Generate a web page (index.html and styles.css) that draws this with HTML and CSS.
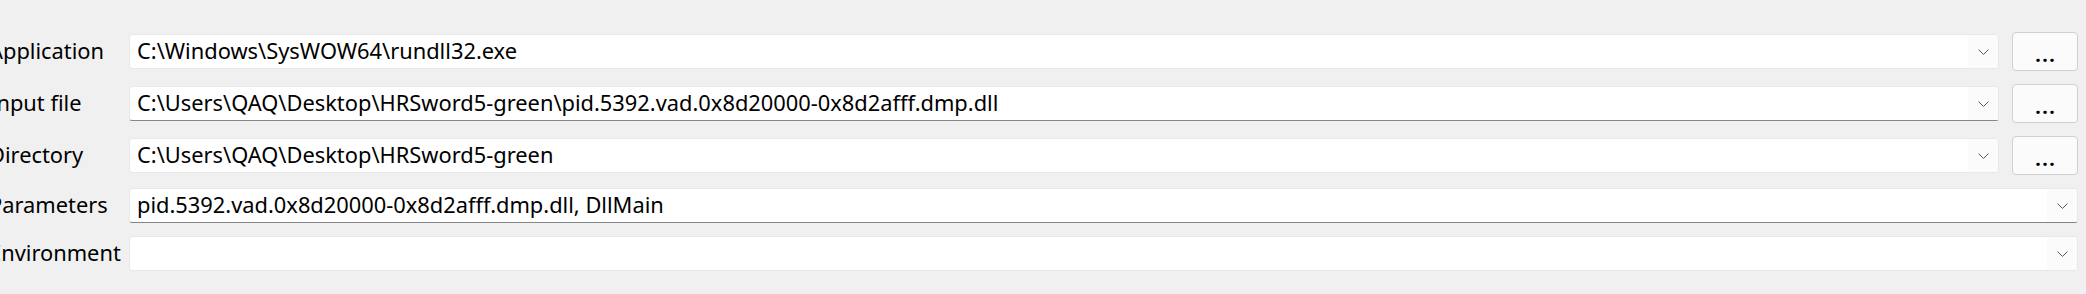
FILE: index.html
```html
<!DOCTYPE html>
<html lang="en">
<head>
<meta charset="utf-8">
<title>Run options</title>
<link rel="stylesheet" href="styles.css">
</head>
<body>
<div class="form">
  <span class="lbl">Application</span>
  <div class="combo">
    <span class="val">C:\Windows\SysWOW64\rundll32.exe</span>
    <span class="drop"><svg width="11" height="6" viewBox="0 0 11 6"><polyline points="0.5,0.5 5.5,5.5 10.5,0.5" fill="none" stroke="#5c5c5c" stroke-width="1"/></svg></span>
  </div>
  <button class="browse" type="button">...</button>

  <span class="lbl">Input file</span>
  <div class="combo underline">
    <span class="val">C:\Users\QAQ\Desktop\HRSword5-green\pid.5392.vad.0x8d20000-0x8d2afff.dmp.dll</span>
    <span class="drop"><svg width="11" height="6" viewBox="0 0 11 6"><polyline points="0.5,0.5 5.5,5.5 10.5,0.5" fill="none" stroke="#5c5c5c" stroke-width="1"/></svg></span>
  </div>
  <button class="browse" type="button">...</button>

  <span class="lbl">Directory</span>
  <div class="combo">
    <span class="val">C:\Users\QAQ\Desktop\HRSword5-green</span>
    <span class="drop"><svg width="11" height="6" viewBox="0 0 11 6"><polyline points="0.5,0.5 5.5,5.5 10.5,0.5" fill="none" stroke="#5c5c5c" stroke-width="1"/></svg></span>
  </div>
  <button class="browse" type="button">...</button>

  <span class="lbl">Parameters</span>
  <div class="combo wide underline">
    <span class="val">pid.5392.vad.0x8d20000-0x8d2afff.dmp.dll, DllMain</span>
    <span class="drop"><svg width="11" height="6" viewBox="0 0 11 6"><polyline points="0.5,0.5 5.5,5.5 10.5,0.5" fill="none" stroke="#5c5c5c" stroke-width="1"/></svg></span>
  </div>

  <span class="lbl">Environment</span>
  <div class="combo wide">
    <span class="val"></span>
    <span class="drop"><svg width="11" height="6" viewBox="0 0 11 6"><polyline points="0.5,0.5 5.5,5.5 10.5,0.5" fill="none" stroke="#5c5c5c" stroke-width="1"/></svg></span>
  </div>
</div>
</body>
</html>
```

FILE: styles.css
```css
html, body {
  margin: 0;
  padding: 0;
  background: #f0f0f0;
  overflow: hidden;
}

body {
  font-family: "Noto Sans", "Open Sans", sans-serif;
  font-size: 21.85px;
  color: #000;
}

.form {
  display: grid;
  grid-template-columns: 127px 1fr 66px;
  column-gap: 13px;
  row-gap: 13px;
  align-items: center;
  margin-left: -11px;
  padding: 32px 8px 0 0;
}

.lbl {
  white-space: nowrap;
  height: 35px;
  box-sizing: border-box;
  padding-bottom: 3px;
  display: flex;
  align-items: center;
}

.combo {
  display: flex;
  align-items: stretch;
  height: 35px;
  box-sizing: border-box;
  background: #ffffff;
  border: 1px solid #e8e8e8;
  border-radius: 3px;
  overflow: hidden;
}

.combo.wide {
  grid-column: 2 / 4;
}

.combo.underline {
  border-bottom: 1px solid #858585;
}

.val {
  flex: 1;
  white-space: nowrap;
  overflow: hidden;
  padding: 0 0 3px 7px;
  display: flex;
  align-items: center;
}

.drop {
  width: 30px;
  flex: none;
  box-sizing: border-box;
  display: flex;
  align-items: center;
  justify-content: center;
  background: #fbfbfb;
}

.browse {
  height: 39px;
  width: 66px;
  box-sizing: border-box;
  border: 1px solid #d0d0d0;
  border-radius: 4px;
  background: #fbfbfb;
  font-family: inherit;
  font-size: 21.85px;
  font-weight: 600;
  letter-spacing: 1px;
  color: #000;
  padding: 4px 0 0 1px;
  line-height: 1;
}
```
